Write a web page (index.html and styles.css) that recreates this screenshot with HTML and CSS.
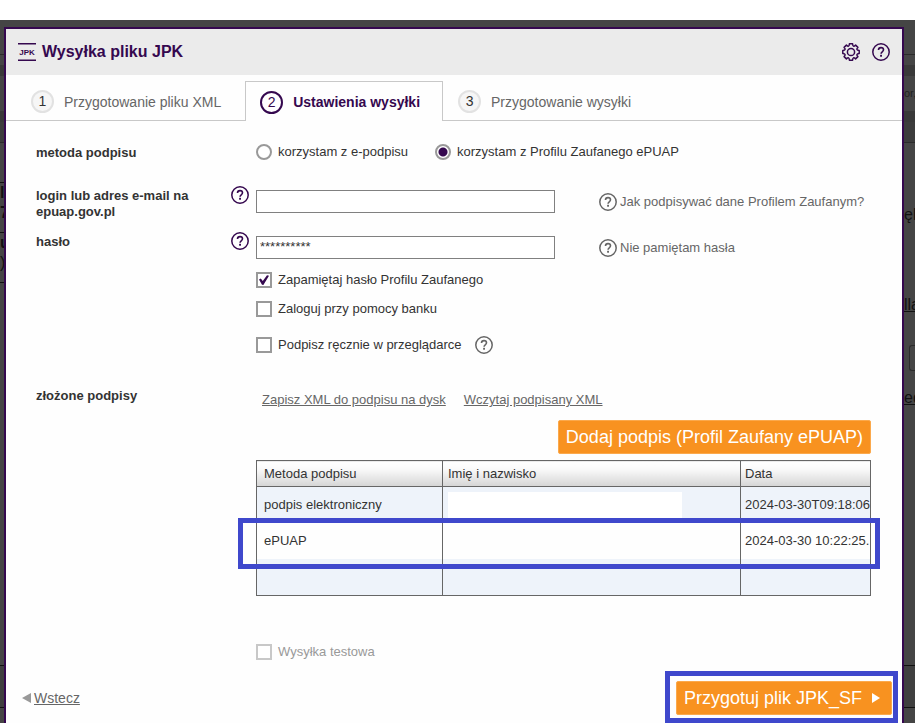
FILE: index.html
```html
<!DOCTYPE html>
<html lang="pl">
<head>
  <meta charset="UTF-8" />
  <meta name="viewport" content="width=device-width, initial-scale=1.0" />
  <title>Wysyłka pliku JPK</title>
  <link rel="stylesheet" href="styles.css">
</head>
<body>
  <svg class="sprite" aria-hidden="true">
    <symbol id="help" viewBox="0 0 18 18">
      <circle cx="9" cy="9" r="8.2" fill="none" stroke="currentColor" stroke-width="1.5" />
      <path d="M6.5 7C6.5 5.4 7.5 4.6 9 4.6s2.5.8 2.5 2.1c0 1-.6 1.5-1.3 2.1-.8.6-1.1 1-1.1 2" fill="none" stroke="currentColor" stroke-width="1.6" />
      <rect x="8.1" y="11.8" width="1.9" height="1.9" fill="currentColor" />
    </symbol>
  </svg>

  <div class="backdrop">
    <!-- page showing from under the dialog -->
    <div class="edge edge-left" aria-hidden="true">
      <div class="strip strip-top"></div>
      <div class="strip strip-menu"></div>
      <div class="strip strip-bar"></div>
      <div class="strip strip-path"></div>
      <div class="strip strip-bar"></div>
      <div class="strip strip-tabs"></div>
      <div class="strip strip-gap"></div>
      <div class="strip strip-cell"><b>lo</b><b>7</b></div>
      <div class="strip strip-cell"><b>u</b><span>)</span></div>
      <div class="strip strip-fill"></div>
      <div class="strip strip-row"></div>
      <div class="strip strip-last"></div>
    </div>

    <div class="dialog">
      <header class="dialog-header">
        <svg class="logo" viewBox="0 0 18 18">
          <path d="M0 .8h18M0 17.2h18" stroke="#35084f" stroke-width="1.4" />
          <text x="9" y="12" text-anchor="middle">JPK</text>
        </svg>
        <h1>Wysyłka pliku JPK</h1>
        <button class="icon-button" aria-label="Ustawienia">
          <svg class="icon" viewBox="0 0 18 18" fill="none" stroke="currentColor" stroke-width="1.5" stroke-linejoin="round">
            <path d="M17.2 7.4v3.2Q13.3 10.8 15.9 13.6L13.6 15.9Q10.8 13.3 10.6 17.2H7.4Q7.2 13.3 4.4 15.9L2.1 13.6Q4.7 10.8 .8 10.6V7.4Q4.7 7.2 2.1 4.4L4.4 2.1Q7.2 4.7 7.4 .8h3.2Q10.8 4.7 13.6 2.1L15.9 4.4Q13.3 7.2 17.2 7.4z" />
            <circle cx="9" cy="9" r="3.6" />
          </svg>
        </button>
        <button class="icon-button" aria-label="Pomoc"><svg class="icon"><use href="#help" /></svg></button>
      </header>

      <nav class="tabs">
        <div class="tab tab-first"><span class="step">1</span>Przygotowanie pliku XML</div>
        <div class="tab tab-active"><span class="step">2</span>Ustawienia wysyłki</div>
        <div class="tab tab-last"><span class="step">3</span>Przygotowanie wysyłki</div>
      </nav>

      <form class="form">
        <div class="row row-method">
          <div class="label">metoda podpisu</div>
          <div class="field options">
            <label class="choice"><input type="radio" name="metoda">korzystam z e-podpisu</label>
            <label class="choice"><input type="radio" name="metoda" checked>korzystam z Profilu Zaufanego ePUAP</label>
          </div>
        </div>

        <div class="row row-input">
          <label class="label" for="login">login lub adres e-mail na epuap.gov.pl</label>
          <svg class="icon"><use href="#help" /></svg>
          <div class="field entry">
            <input class="text" id="login" type="text">
            <div class="hint"><svg class="icon"><use href="#help" /></svg>Jak podpisywać dane Profilem Zaufanym?</div>
          </div>
        </div>

        <div class="row row-input">
          <label class="label" for="haslo">hasło</label>
          <svg class="icon"><use href="#help" /></svg>
          <div class="field entry">
            <input class="text" id="haslo" type="text" value="**********">
            <div class="hint"><svg class="icon"><use href="#help" /></svg>Nie pamiętam hasła</div>
          </div>
        </div>

        <div class="row row-checks">
          <div class="field checks">
            <label class="choice"><input type="checkbox" checked>Zapamiętaj hasło Profilu Zaufanego</label>
            <label class="choice"><input type="checkbox">Zaloguj przy pomocy banku</label>
            <div class="manual">
              <label class="choice"><input type="checkbox">Podpisz ręcznie w przeglądarce</label>
              <svg class="icon hint-icon"><use href="#help" /></svg>
            </div>
          </div>
        </div>

        <div class="row row-signatures">
          <div class="label">złożone podpisy</div>
          <div class="field">
            <div class="links">
              <a href="#">Zapisz XML do podpisu na dysk</a>
              <a href="#">Wczytaj podpisany XML</a>
            </div>
            <div class="add">
              <button class="btn" type="button">Dodaj podpis (Profil Zaufany ePUAP)</button>
            </div>
            <div class="signatures">
              <table>
                <thead>
                  <tr><th class="col-method">Metoda podpisu</th><th class="col-name">Imię i nazwisko</th><th>Data</th></tr>
                </thead>
                <tbody>
                  <tr><td>podpis elektroniczny</td><td><div class="blank"></div></td><td>2024-03-30T09:18:06</td></tr>
                  <tr><td>ePUAP</td><td></td><td>2024-03-30 10:22:25.</td></tr>
                  <tr><td></td><td></td><td></td></tr>
                </tbody>
              </table>
              <div class="mark"></div>
            </div>
            <label class="choice choice-test"><input type="checkbox" disabled>Wysyłka testowa</label>
          </div>
        </div>
      </form>

      <footer class="dialog-footer">
        <div class="back">
          <svg class="arrow-back" viewBox="0 0 9 10"><path d="M9 0v10L0 5z" fill="#999" /></svg>
          <a href="#">Wstecz</a>
        </div>
        <div class="mark-next">
          <button class="btn btn-next" type="button">Przygotuj plik JPK_SF
            <svg class="arrow-next" viewBox="0 0 8 10"><path d="M0 0v10l8-5z" fill="#fff" /></svg>
          </button>
        </div>
      </footer>
    </div>

    <div class="edge edge-right" aria-hidden="true">
      <div class="strip strip-top"></div>
      <div class="strip strip-menu"></div>
      <div class="strip strip-bar"></div>
      <div class="strip strip-path">or,</div>
      <div class="strip strip-bar"></div>
      <div class="strip strip-tabs"></div>
      <div class="strip strip-word">ęb</div>
      <div class="strip strip-word"><u>lla</u></div>
      <div class="strip strip-select"></div>
      <div class="strip strip-name"><u>ed</u></div>
      <div class="strip strip-fill"></div>
      <div class="strip strip-row"></div>
      <div class="strip strip-last"></div>
    </div>
  </div>
</body>
</html>
```
FILE: styles.css
```css
* { box-sizing: border-box; }
body { margin: 0; padding-top: 20px; background: #fff; font: 13px/16px "Liberation Sans", Arial, sans-serif; color: #333; }
a { color: #666; }
.sprite { position: absolute; width: 0; height: 0; }
.icon { display: block; width: 18px; height: 18px; flex: none; color: #35084f; overflow: visible; }

.backdrop { display: flex; min-height: calc(100vh - 20px); background: #454545; }

/* page under the dialog */
.edge { display: flex; flex-direction: column; overflow: hidden; color: #111; font-size: 16px; line-height: 20px; white-space: nowrap; }
.edge-left { width: 4px; }
.edge-right { width: 11px; }
.strip { flex: none; overflow: hidden; }
.strip-top { height: 35px; border-bottom: 1px solid #2b2b2b; }
.strip-menu { height: 10px; }
.strip-bar { height: 11px; background: #393939; }
.strip-path { height: 35px; font-size: 11px; line-height: 35px; color: #222; }
.strip-tabs { height: 21px; background: #3c3c3c; border-bottom: 1px solid #2b2b2b; }
.strip-gap { height: 39px; }
.strip-cell { height: 50px; display: flex; flex-direction: column; border-top: 1px solid #111; }
.strip-cell + .strip-fill { border-top: 1px solid #111; }
.strip-word { height: 90px; padding-top: 62px; }
.strip-select { height: 26px; margin: 22px 0 17px 5px; border: 1px solid #2b2b2b; border-right: 0; border-radius: 3px 0 0 3px; }
.strip-name { height: 22px; }
.strip-fill { flex: 1; }
.strip-row { height: 43px; border: solid #111; border-width: 1px 0; background: #3f3f3f; }
.strip-last { height: 15px; }

/* dialog */
.dialog { flex: 1; display: flex; flex-direction: column; margin-top: 7px; min-width: 0; background: #fefefe; border: 2px solid #35084f; border-bottom: 0; }
.dialog-header { display: flex; align-items: center; gap: 12px; height: 46px; padding: 0 12px; background: #ebebeb; color: #35084f; }
.dialog-header h1 { flex: 1; margin: 0 0 0 -6px; font-size: 16px; line-height: 20px; }
.logo { width: 18px; height: 18px; overflow: visible; }
.logo text { font-size: 8px; font-weight: bold; fill: #35084f; }
.icon-button { padding: 0; border: 0; background: none; cursor: pointer; }

.tabs { display: flex; height: 46px; padding-top: 6px; font-size: 14px; color: #666; }
.tab { display: flex; align-items: center; gap: 10px; padding: 2px 24px 0 25px; border-bottom: 1px solid #c8c8c8; white-space: nowrap; }
.tab-active { padding: 1px 22px 0 14px; border: 1px solid #c8c8c8; border-bottom: 0; font-weight: bold; color: #35084f; }
.tab-last { flex: 1; padding-left: 15px; }
.step { width: 23px; height: 23px; border: 2px solid #e2e2e2; border-radius: 50%; background: #f6f6f6; font-weight: normal; line-height: 19px; text-align: center; color: #333; }
.tab-active .step { border-color: #35084f; background: #fff; color: #35084f; }

/* form */
.form { padding: 23px 31px 0 30px; }
.row { display: grid; grid-template-columns: 195px 25px 1fr; align-items: start; }
.label { font-weight: bold; padding-right: 30px; }
.field { grid-column: 3; min-width: 0; }
.row-method { height: 42px; }
.row-input { height: 46px; }
.row-method .label { padding-top: 1px; }
.row-input .label { padding-top: 2px; }
.options { display: flex; gap: 27px; }
.choice { display: flex; align-items: center; gap: 6px; white-space: nowrap; }
.choice input { appearance: none; position: relative; width: 16px; height: 16px; margin: 0; border: 2px solid #999; background: #fff; }
.choice input[type="radio"] { border-radius: 50%; }
.choice input[type="radio"]:checked { background: radial-gradient(circle, #35084f 4px, #fff 5px); }
.choice input[type="checkbox"]:checked::before { content: ""; position: absolute; inset: 1px; background: #35084f; clip-path: polygon(0 45%, 18% 36%, 38% 60%, 80% 2%, 100% 8%, 44% 100%, 30% 98%); }
.entry { display: flex; align-items: center; padding-top: 4px; }
.text { width: 299px; height: 23px; padding: 0 3px 2px; border: 1px solid #808080; background: #fff; font: inherit; color: #333; }
.hint { display: flex; align-items: center; gap: 3px; margin-left: 44px; color: #666; white-space: nowrap; }
.hint .icon, .hint-icon { color: #666; }
.row-checks { margin-top: -6px; }
.checks { display: flex; flex-direction: column; gap: 13px; }
.manual { display: flex; align-items: center; gap: 13px; margin-top: 6px; }

.row-signatures { margin-top: 34px; }
.links { display: flex; gap: 18px; padding: 4px 6px 0; }
.add { display: flex; justify-content: flex-end; margin: 12px 0 6px; }
.btn { height: 34px; padding: 0 7px; border: 1px solid #fba94c; border-radius: 2px; background: #f89220; font: 18px/20px "Liberation Sans", Arial, sans-serif; color: #fff; white-space: nowrap; cursor: pointer; }

.signatures { position: relative; }
table { width: 100%; border-collapse: collapse; table-layout: fixed; border: 1px solid #666; }
.col-method { width: 186px; }
.col-name { width: 298px; }
th { height: 26px; padding: 0 5px; border: 1px solid #666; background: linear-gradient(#fff, #fafafa 30%, #d5d5d5); font-weight: normal; text-align: left; }
td { height: 36px; padding: 0 0 0 5px; border-right: 1px solid #666; overflow: hidden; white-space: nowrap; }
th:first-child, td:first-child { padding-left: 7px; }
th:last-child, td:last-child { padding-left: 4px; }
tbody tr:nth-child(odd) { background: #eef3fa; }
tbody tr:last-child td { height: 37px; }
.blank { width: 234px; height: 26px; background: #fff; }
/* frame over the ePUAP row */
.mark { position: absolute; top: 58px; left: -18px; right: -9px; height: 51px; border: 5px solid #3f48cc; }
.choice-test { margin-top: 48px; color: #999; }
.choice-test input { border-color: #c8c8c8; }

.dialog-footer { display: flex; justify-content: space-between; align-items: center; margin-top: auto; padding: 0 4px 0 16px; }
.back { display: flex; align-items: center; gap: 3px; padding-top: 2px; font-size: 14px; }
.arrow-back { width: 9px; height: 10px; }
.mark-next { padding: 5px 1px 3px 6px; border: 5px solid #3f48cc; }
.btn-next { display: flex; align-items: center; gap: 10px; padding-right: 11px; }
.arrow-next { width: 8px; height: 10px; }
```
